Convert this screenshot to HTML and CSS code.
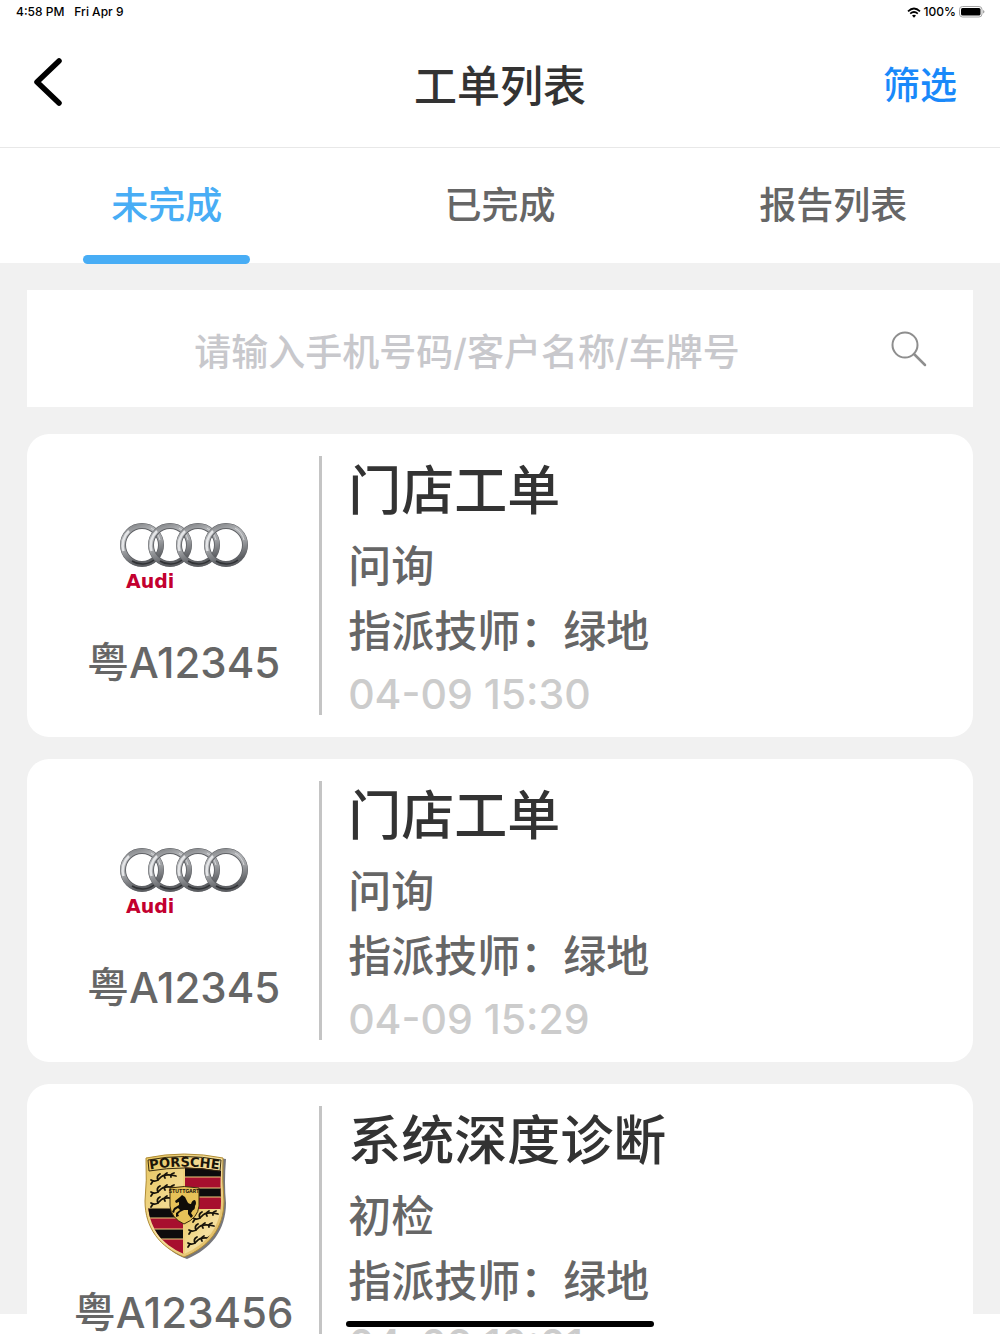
FILE: index.html
```html
<!DOCTYPE html>
<html lang="zh-CN">
<head>
<meta charset="UTF-8">
<meta name="viewport" content="width=device-width, initial-scale=1.0">
<title>工单列表</title>
<link rel="stylesheet" href="styles.css">
</head>
<body>
  <!-- logo 定义 -->
  <svg class="defs" width="0" height="0" aria-hidden="true">
    <defs>
      <linearGradient id="chrome" x1="0" y1="0" x2="0.3" y2="1">
        <stop offset="0" stop-color="#7d7f82"/>
        <stop offset="0.3" stop-color="#b4b6b9"/>
        <stop offset="0.6" stop-color="#a0a2a5"/>
        <stop offset="1" stop-color="#5c5e62"/>
      </linearGradient>
      <linearGradient id="gold" x1="0" y1="0" x2="1" y2="1">
        <stop offset="0" stop-color="#e6c45c"/>
        <stop offset="0.5" stop-color="#f5e0a0"/>
        <stop offset="1" stop-color="#d9ae4c"/>
      </linearGradient>
      <clipPath id="shield-clip">
        <path d="M7 18Q43 11 80 18Q79 31 80 48C80 74 66 91 43 101C20 91 7 74 7 48Q8 31 7 18Z"/>
      </clipPath>
      <g id="ring">
        <circle r="19" fill="none" stroke="#606266" stroke-width="6"/>
        <circle r="19.200" fill="none" stroke="url(#chrome)" stroke-width="4.600"/>
        <path d="M-18.500 6A19.500 19.500 0 0 1 -13 -14" fill="none" stroke="#e4e5e7" stroke-width="2.500"/>
        <path d="M9 -17A19 19 0 0 1 18 -5" fill="none" stroke="#d5d6d8" stroke-width="1"/>
        <path d="M-10 16A19 19 0 0 0 12 15" fill="none" stroke="#303235" stroke-width="1.500"/>
      </g>
      <g id="antler" fill="none" stroke="#17130a" stroke-linecap="round">
        <path d="M1 8Q6 11 10 6T26 4" stroke-width="1.800"/>
        <path d="M8 8Q6 4 10 2M15 6Q13 3 17 1M21 5Q20 2 24 1M3 9L1 12" stroke-width="1.800"/>
      </g>
      <symbol id="audi" viewBox="0 0 130 70">
        <use href="#ring" x="23" y="24"/>
        <use href="#ring" x="51" y="24"/>
        <use href="#ring" x="79" y="24"/>
        <use href="#ring" x="107" y="24"/>
        <text class="audi-name" x="7" y="67">Audi</text>
      </symbol>
      <symbol id="porsche" viewBox="0 0 86 106">
        <path d="M6 6Q46 -1 85 6Q83 30 85 50C85 77 70 96 46 106C22 97 8 78 6 48Z" fill="#77777b"/>
        <path d="M5 5Q43 -3 82 5Q81 28 83 48C83 75 68 94 43 104C19 94 4 75 4 48Q6 28 5 5Z" fill="url(#gold)" stroke="#b08c35"/>
        <g clip-path="url(#shield-clip)">
          <path d="M43 0H86V57H43Z" fill="#a70f2e"/>
          <path d="M43 12H86V24H43ZM43 35H86V44H43Z" fill="#0d0b0c"/>
          <path d="M43 24H86M43 35H86M43 44H86" stroke="#efd07c"/>
          <path d="M0 55H43V106H0Z" fill="#a70f2e"/>
          <path d="M0 55H43V65H0ZM0 76H43V86H0Z" fill="#0d0b0c"/>
          <path d="M0 55H43M0 65H43M0 76H43M0 86H43" stroke="#efd07c"/>
          <path d="M43 56H86V106H43Z" fill="url(#gold)"/>
          <path d="M43 12V104" stroke="#efd07c" stroke-width="2"/>
          <use href="#antler" x="9" y="19"/>
          <use href="#antler" x="9" y="31"/>
          <use href="#antler" x="9" y="42"/>
          <use href="#antler" x="51" y="57"/>
          <use href="#antler" x="47" y="69"/>
          <use href="#antler" x="46" y="82"/>
        </g>
        <path d="M7 7Q43 0 80 7L79 18Q43 12 8 18Z" fill="none" stroke="#3a2d10"/>
        <path id="arc" d="M6 17Q43 10 81 17" fill="none"/>
        <text class="porsche-name"><textPath href="#arc" startOffset="50%" text-anchor="middle">PORSCHE</textPath></text>
        <path d="M29 35Q43 32 58 35V53Q57 65 43 71Q30 65 29 53Z" fill="#e7c258" stroke="#3a2b0b"/>
        <text class="porsche-city" x="43" y="40" text-anchor="middle">STUTTGART</text>
        <path d="M39 44L41 42L44 44L46 48Q47 51 50 51Q51 47 54 47Q56 50 54 53Q54 57 52 57L50 60L52 63L50 65L47 61L47 57L43 57L39 59L37 61L38 63L35 64L35 60L39 57L37 55L34 57L33 60L31 59L33 55L38 52L38 49L35 50L34 48Z" fill="#100d08"/>
      </symbol>
    </defs>
  </svg>

  <!-- 状态栏 -->
  <div class="status-bar">
    <div class="status-left"><span>4:58 PM</span><span>Fri Apr 9</span></div>
    <div class="status-right">
      <svg width="14" height="11" viewBox="0 0 14 11" aria-hidden="true">
        <path d="M1 4.300Q7 -1.300 13 4.300M3.200 6.700Q7 3.300 10.800 6.700" fill="none" stroke="#000" stroke-width="1.700"/>
        <path d="M5 8.500Q7 7 9 8.500L7 10.700Z"/>
      </svg>
      <span>100%</span>
      <svg width="26" height="12" viewBox="0 0 26 12" aria-hidden="true">
        <rect x="0.500" y="0.500" width="22.500" height="10.500" rx="3" fill="#fff" stroke="#a5a5a5"/>
        <rect x="2" y="2" width="19.500" height="7.500" rx="1.500"/>
        <path d="M24 4Q25.500 4.500 25.500 5.800T24 7.500Z" fill="#a5a5a5"/>
      </svg>
    </div>
  </div>

  <header class="header">
    <button class="back" type="button" aria-label="返回">
      <svg width="30" height="50" viewBox="0 0 30 50" aria-hidden="true">
        <path d="M26 4L4 25L26 46" fill="none" stroke="#000" stroke-width="5.500" stroke-linecap="round" stroke-linejoin="round"/>
      </svg>
    </button>
    <h1>工单列表</h1>
    <button class="filter" type="button">筛选</button>
  </header>

  <nav class="tabs">
    <a class="tab active" href="#todo">未完成</a>
    <a class="tab" href="#done">已完成</a>
    <a class="tab" href="#report">报告列表</a>
  </nav>

  <main class="content">
    <form class="search">
      <input type="text" placeholder="请输入手机号码/客户名称/车牌号" aria-label="请输入手机号码/客户名称/车牌号">
      <button type="submit" aria-label="搜索">
        <svg width="36" height="36" viewBox="0 0 36 36" aria-hidden="true">
          <circle cx="14" cy="14" r="12.500" fill="none" stroke="#8e8e8e" stroke-width="2"/>
          <path d="M23 23L34 34" stroke="#8e8e8e" stroke-width="2.500" stroke-linecap="round"/>
        </svg>
      </button>
    </form>

    <!-- 工单 -->
    <article class="card">
      <div class="car">
        <div class="logo"><svg width="130" height="70" role="img" aria-label="Audi"><use href="#audi"/></svg></div>
        <p class="plate">粤A12345</p>
      </div>
      <div class="info">
        <h2>门店工单</h2>
        <p>问询</p>
        <p>指派技师：绿地</p>
        <time>04-09 15:30</time>
      </div>
    </article>

    <article class="card">
      <div class="car">
        <div class="logo"><svg width="130" height="70" role="img" aria-label="Audi"><use href="#audi"/></svg></div>
        <p class="plate">粤A12345</p>
      </div>
      <div class="info">
        <h2>门店工单</h2>
        <p>问询</p>
        <p>指派技师：绿地</p>
        <time>04-09 15:29</time>
      </div>
    </article>

    <article class="card">
      <div class="car">
        <div class="logo"><svg width="86" height="106" role="img" aria-label="Porsche"><use href="#porsche"/></svg></div>
        <p class="plate">粤A123456</p>
      </div>
      <div class="info">
        <h2>系统深度诊断</h2>
        <p>初检</p>
        <p>指派技师：绿地</p>
        <time>04-09 10:01</time>
      </div>
    </article>
  </main>

  <div class="home-indicator"></div>
</body>
</html>
```
FILE: styles.css
```css
* {
  box-sizing: border-box;
}

body {
  margin: 0;
  height: 100vh;
  display: flex;
  flex-direction: column;
  overflow: hidden;
  background: #fff;
  color: #666;
  font-family: Inter, "Noto Sans CJK SC", sans-serif;
  font-weight: 500;
}

h1, h2, p {
  margin: 0;
  font-weight: 500;
}

button {
  padding: 0;
  border: 0;
  background: none;
  font: inherit;
}

svg {
  display: block;
}

.defs {
  position: absolute;
}

/* 状态栏 */
.status-bar {
  flex: none;
  display: flex;
  justify-content: space-between;
  height: 24px;
  padding: 0 15px 0 16px;
  line-height: 24px;
  font-size: 12px;
  color: #000;
}

.status-left {
  display: flex;
  gap: 10px;
}

.status-right {
  display: flex;
  align-items: center;
  gap: 3px;
}

/* 头部 */
.header {
  flex: none;
  display: grid;
  grid-template-columns: 1fr auto 1fr;
  align-items: center;
  height: 124px;
  padding: 0 33px;
  border-bottom: 1px solid #e8e8e8;
}

.header h1 {
  font-size: 43px;
  line-height: 60px;
  color: #333;
}

.back {
  justify-self: start;
  padding-bottom: 8px;
}

.filter {
  justify-self: end;
  padding-right: 10px;
  font-size: 37px;
  line-height: 60px;
  color: #1989fa;
}

/* 标签 */
.tabs {
  flex: none;
  display: flex;
  height: 115px;
}

.tab {
  flex: 1;
  position: relative;
  font-size: 37px;
  line-height: 115px;
  text-align: center;
  text-decoration: none;
  color: #666;
}

.tab.active {
  color: #48adf5;
}

.tab.active::after {
  content: "";
  position: absolute;
  left: 25%;
  right: 25%;
  bottom: -1px;
  height: 9px;
  border-radius: 5px;
  background: #48adf5;
}

.content {
  flex: 1;
  min-height: 0;
  margin-bottom: 20px;
  padding: 27px 27px 0;
  background: #f1f1f1;
}

.search {
  display: flex;
  align-items: center;
  height: 117px;
  margin-bottom: 27px;
  padding: 0 46px;
  background: #fff;
}

.search input {
  flex: 1;
  min-width: 0;
  height: 60px;
  padding: 8px 30px 0 0;
  border: 0;
  outline: 0;
  font: inherit;
  font-size: 37px;
  text-align: center;
  color: #333;
}

.search input::placeholder {
  color: #c8c8cc;
}

/* 卡片 */
.card {
  display: flex;
  margin-bottom: 22px;
  padding: 22px 0;
  border-radius: 22px;
  background: #fff;
}

.car {
  flex: 0 0 31.2%;
  display: flex;
  flex-direction: column;
  align-items: center;
  padding: 36px 0 0 21px;
  border-right: 3px solid #c4c4c4;
}

.logo {
  display: flex;
  align-items: center;
  height: 128px;
}

.plate {
  margin-top: 10px;
  font-size: 42px;
  line-height: 65px;
}

.info {
  flex: 1;
  padding-left: 26px;
  font-size: 43px;
  line-height: 65px;
}

.info h2 {
  margin-bottom: 7px;
  font-size: 53px;
  line-height: 71px;
  color: #333;
}

.info time {
  display: block;
  margin-top: 9px;
  font-size: 41px;
  line-height: 42px;
  color: #ccc;
}

/* logo 文字 */
.audi-name {
  font: bold 19px "DejaVu Sans", sans-serif;
  fill: #c3002f;
}

.porsche-name {
  font: bold 13px "DejaVu Sans", sans-serif;
  fill: #1b1509;
}

.porsche-city {
  font: bold 5px Inter, sans-serif;
  fill: #1b1509;
}

.home-indicator {
  position: fixed;
  bottom: 7px;
  left: 50%;
  width: 308px;
  height: 6px;
  margin-left: -154px;
  border-radius: 3px;
  background: #000;
}
```
